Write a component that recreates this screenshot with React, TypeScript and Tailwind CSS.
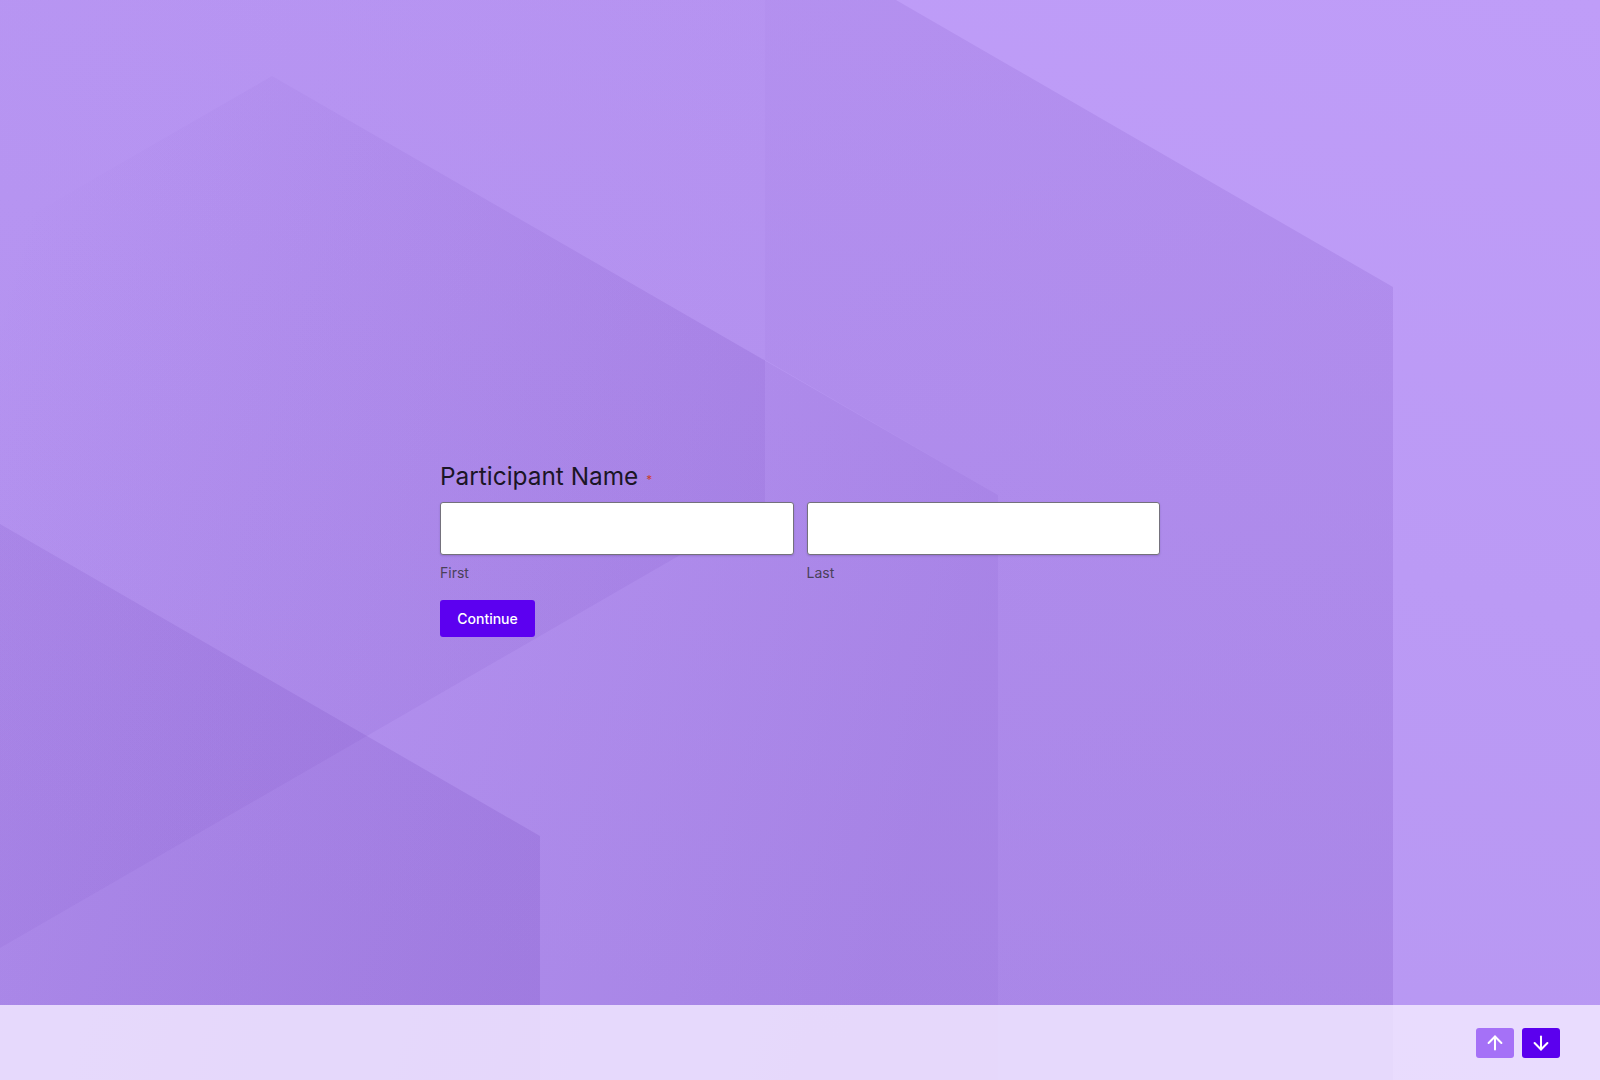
import React from "react";

function Background() {
  return (
    <svg
      className="absolute inset-0 h-full w-full"
      viewBox="0 0 1600 1080"
      preserveAspectRatio="none"
      aria-hidden="true"
    >
      <defs>
        <linearGradient id="base" x1="1" y1="0" x2="0.6" y2="1">
          <stop offset="0" stopColor="#bf9df8" />
          <stop offset="1" stopColor="#b797f2" />
        </linearGradient>
        <linearGradient id="gA" x1="0" y1="0" x2="0.3" y2="1">
          <stop offset="0" stopColor="#5a28aa" stopOpacity="0.1" />
          <stop offset="1" stopColor="#5a28aa" stopOpacity="0.15" />
        </linearGradient>
        <linearGradient id="gF" x1="0" y1="0" x2="1" y2="0.4">
          <stop offset="0" stopColor="#5a28aa" stopOpacity="0.05" />
          <stop offset="1" stopColor="#5a28aa" stopOpacity="0.08" />
        </linearGradient>
        <linearGradient id="gB" x1="0" y1="0.2" x2="1" y2="0.5">
          <stop offset="0" stopColor="#5a28aa" stopOpacity="0.0" />
          <stop offset="0.3" stopColor="#5a28aa" stopOpacity="0.06" />
          <stop offset="0.7" stopColor="#5a28aa" stopOpacity="0.13" />
          <stop offset="1" stopColor="#5a28aa" stopOpacity="0.19" />
        </linearGradient>
        <linearGradient id="gD" x1="0" y1="0" x2="1" y2="0.3">
          <stop offset="0" stopColor="#5a28aa" stopOpacity="0.1" />
          <stop offset="1" stopColor="#5a28aa" stopOpacity="0.14" />
        </linearGradient>
      </defs>
      <rect x="0" y="0" width="1600" height="1080" fill="url(#base)" />
      <polygon
        points="765,0 896,0 1393,287 1393,1080 998,1080 998,495 765,360"
        fill="url(#gA)"
      />
      <polygon points="0,0 765,0 765,506 0,948" fill="url(#gF)" />
      <polygon points="272,76 998,495 998,1080 0,1080 0,233" fill="url(#gB)" />
      <polygon points="0,524 540,836 540,1080 0,1080" fill="url(#gD)" />
    </svg>
  );
}

function ArrowUp() {
  return (
    <svg width="22" height="22" viewBox="0 0 24 24" fill="none" stroke="white" strokeWidth="2.2" strokeLinecap="round" strokeLinejoin="round">
      <path d="M5 12l7-7 7 7" />
      <path d="M12 19V5" />
    </svg>
  );
}

function ArrowDown() {
  return (
    <svg width="22" height="22" viewBox="0 0 24 24" fill="none" stroke="white" strokeWidth="2.2" strokeLinecap="round" strokeLinejoin="round">
      <path d="M12 5v14" />
      <path d="M19 12l-7 7-7-7" />
    </svg>
  );
}

export default function App() {
  return (
    <div
      className="relative flex h-[1080px] w-full flex-col overflow-hidden"
      style={{ fontFamily: "Inter, 'Noto Sans', sans-serif" }}
    >
      <Background />
      <main className="relative flex h-[1005px] w-full justify-center pt-[460px]">
        <div className="w-[720px]">
          <h1 className="flex items-start text-[24.4px] leading-[32px] font-normal text-[#1b1525]">
            Participant Name
            <span className="ml-[8px] mt-[13px] text-[12px] leading-[14px] text-[#c9412e]">*</span>
          </h1>
          <div className="mt-[10px] grid grid-cols-2 gap-x-[13px]">
            <div>
              <input
                type="text"
                aria-label="First"
                className="block h-[53px] w-full rounded-[3px] border border-[#74717c] bg-white px-3 text-[16px] shadow-[0_1px_2px_rgba(40,20,80,0.18)] outline-none"
              />
              <div className="mt-[8px] text-[14px] leading-[20px] text-[#4a4159]">First</div>
            </div>
            <div>
              <input
                type="text"
                aria-label="Last"
                className="block h-[53px] w-full rounded-[3px] border border-[#74717c] bg-white px-3 text-[16px] shadow-[0_1px_2px_rgba(40,20,80,0.18)] outline-none"
              />
              <div className="mt-[8px] text-[14px] leading-[20px] text-[#4a4159]">Last</div>
            </div>
          </div>
          <button
            type="button"
            className="mt-[17px] flex h-[37px] w-[95px] items-center justify-center rounded-[3px] bg-[#5c00f0] text-[14px] font-medium text-white"
          >
            Continue
          </button>
        </div>
      </main>
      <footer className="relative flex h-[75px] w-full items-center justify-end gap-2 bg-[#f1e7ff]/85 pr-[40px]">
        <button
          type="button"
          aria-label="Previous"
          className="flex h-[30px] w-[38px] items-center justify-center rounded-[3px] bg-[#a571f7]"
        >
          <ArrowUp />
        </button>
        <button
          type="button"
          aria-label="Next"
          className="flex h-[30px] w-[38px] items-center justify-center rounded-[3px] bg-[#5b00ee]"
        >
          <ArrowDown />
        </button>
      </footer>
    </div>
  );
}
